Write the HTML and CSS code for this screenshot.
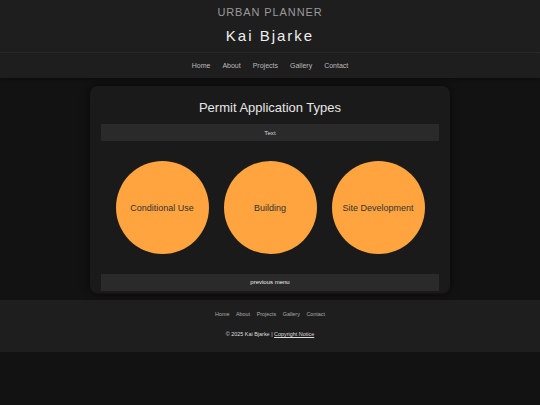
FILE: index.html
```html
<!DOCTYPE html>
<html>
<head>
<meta charset="utf-8">
<link rel="stylesheet" href="styles.css">
</head>
<body>
<header class="site-header">
  <div class="role">URBAN PLANNER</div>
  <h1 class="name">Kai Bjarke</h1>
</header>
<nav class="main-nav">
  <a href="#">Home</a>
  <a href="#">About</a>
  <a href="#">Projects</a>
  <a href="#">Gallery</a>
  <a href="#">Contact</a>
</nav>
<main class="content">
  <section class="card">
    <h2 class="card-title">Permit Application Types</h2>
    <div class="bar">Text</div>
    <div class="circles">
      <div class="circle">Conditional Use</div>
      <div class="circle">Building</div>
      <div class="circle">Site Development</div>
    </div>
    <div class="bar bar-light">previous menu</div>
  </section>
</main>
<footer class="site-footer">
  <div class="foot-links">
    <a href="#">Home</a>
    <a href="#">About</a>
    <a href="#">Projects</a>
    <a href="#">Gallery</a>
    <a href="#">Contact</a>
  </div>
  <div class="copy">© 2025 Kai Bjarke | <a href="#" class="notice">Copyright Notice</a></div>
</footer>
</body>
</html>
```
FILE: styles.css
```css
html, body {
  margin: 0;
  padding: 0;
  background: #121212;
  font-family: "Liberation Sans", Arial, sans-serif;
}
a { text-decoration: none; }

.site-header {
  background: #1e1e1e;
  text-align: center;
  padding: 5px 0 7px;
  border-bottom: 1px solid #2c2c2c;
}
.role {
  font-size: 11px;
  line-height: 14px;
  letter-spacing: 0.9px;
  color: #9a9a9a;
}
.name {
  margin: 8px 0 0;
  font-size: 15px;
  line-height: 18px;
  font-weight: normal;
  letter-spacing: 2px;
  color: #eeeeee;
}

.main-nav {
  background: #1e1e1e;
  height: 25px;
  display: flex;
  justify-content: center;
  align-items: center;
  gap: 12px;
  box-shadow: 0 1px 3px rgba(0,0,0,0.4);
  position: relative;
}
.main-nav a {
  font-size: 7px;
  color: #bbbbbb;
}

.content {
  padding: 8px 0 7px;
}
.card {
  width: 360px;
  box-sizing: border-box;
  margin: 0 auto;
  background: #1a1a1a;
  border-radius: 8px;
  padding: 11px 11px 2px;
  box-shadow: 0 0 10px rgba(0,0,0,0.6), 0 1px 2px rgba(255,140,0,0.08);
}
.card-title {
  margin: 3px 0 8px;
  text-align: center;
  font-size: 13px;
  line-height: 16px;
  font-weight: normal;
  color: #e6e6e6;
}
.bar {
  background: #2a2a2a;
  height: 17px;
  line-height: 17px;
  text-align: center;
  font-size: 6.2px;
  color: #d6d6d6;
}
.bar-light { color: #eeeeee; font-size: 6px; }

.circles {
  display: flex;
  justify-content: center;
  gap: 15px;
  padding: 20px 0 20px;
}
.circle {
  width: 93px;
  height: 93px;
  border-radius: 50%;
  background: #ffa43f;
  display: flex;
  align-items: center;
  justify-content: center;
  font-size: 9px;
  color: #333333;
}

.site-footer {
  background: #1e1e1e;
  height: 52px;
  box-sizing: border-box;
  padding-top: 10px;
  text-align: center;
}
.foot-links {
  display: flex;
  justify-content: center;
  gap: 6.6px;
  line-height: 8px;
}
.foot-links a {
  font-size: 5.4px;
  color: #aaaaaa;
}
.copy {
  margin-top: 12px;
  line-height: 8px;
  font-size: 5.45px;
  color: #dddddd;
}
.copy .notice {
  color: #dddddd;
  text-decoration: underline;
}
```
